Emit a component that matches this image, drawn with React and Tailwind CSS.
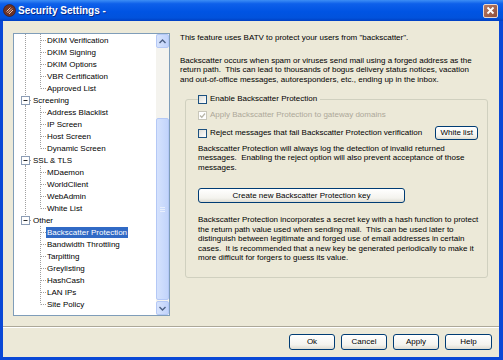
import React from "react";

const rows = [
  { t: "DKIM Verification", c: 1, root: "full" },
  { t: "DKIM Signing", c: 1, root: "full" },
  { t: "DKIM Options", c: 1, root: "full" },
  { t: "VBR Certification", c: 1, root: "full" },
  { t: "Approved List", c: 1, root: "full", last: true },
  { t: "Screening", c: 0, root: "full" },
  { t: "Address Blacklist", c: 1, root: "full" },
  { t: "IP Screen", c: 1, root: "full" },
  { t: "Host Screen", c: 1, root: "full" },
  { t: "Dynamic Screen", c: 1, root: "full", last: true },
  { t: "SSL & TLS", c: 0, root: "full" },
  { t: "MDaemon", c: 1, root: "full" },
  { t: "WorldClient", c: 1, root: "full" },
  { t: "WebAdmin", c: 1, root: "full" },
  { t: "White List", c: 1, root: "full", last: true },
  { t: "Other", c: 0, root: "top" },
  { t: "Backscatter Protection", c: 1, root: "none", sel: true },
  { t: "Bandwidth Throttling", c: 1, root: "none" },
  { t: "Tarpitting", c: 1, root: "none" },
  { t: "Greylisting", c: 1, root: "none" },
  { t: "HashCash", c: 1, root: "none" },
  { t: "LAN IPs", c: 1, root: "none" },
  { t: "Site Policy", c: 1, root: "none", last: true },
];

const dot = { stroke: "#a0a0a0", strokeWidth: 1, strokeDasharray: "1 1" };

function TreeRow({ r }) {
  if (r.c === 0) {
    return (
      <div className="flex h-[12px] items-center">
        <svg width="18" height="12" className="shrink-0">
          <line x1="11.5" y1="0" x2="11.5" y2="2" {...dot} />
          {r.root === "full" && <line x1="11.5" y1="11" x2="11.5" y2="12" {...dot} />}
          <line x1="16" y1="6.5" x2="18" y2="6.5" {...dot} />
          <rect x="7.5" y="2.5" width="8" height="8" fill="white" stroke="#8c9db5" strokeWidth="1" />
          <line x1="9.5" y1="6.5" x2="13.5" y2="6.5" stroke="#2a2a2a" strokeWidth="1" />
        </svg>
        <span className="pl-[1px] leading-[11px] text-black">{r.t}</span>
      </div>
    );
  }
  return (
    <div className="flex h-[12px] items-center">
      <svg width="32" height="12" className="shrink-0">
        {r.root === "full" && <line x1="11.5" y1="0" x2="11.5" y2="12" {...dot} />}
        <line x1="26.5" y1="0" x2="26.5" y2={r.last ? 6.5 : 12} {...dot} />
        <line x1="27" y1="6.5" x2="32" y2="6.5" {...dot} />
      </svg>
      <span
        className={
          r.sel
            ? "px-[1px] leading-[11px] bg-[#316ac5] text-white"
            : "px-[1px] leading-[11px] text-black"
        }
      >
        {r.t}
      </span>
    </div>
  );
}

function Chevron({ up }) {
  return (
    <svg width="7" height="5" viewBox="0 0 7 5">
      <path
        d={up ? "M0.5 4 L3.5 1 L6.5 4" : "M0.5 1 L3.5 4 L6.5 1"}
        fill="none"
        stroke="#4d6185"
        strokeWidth="1.4"
      />
    </svg>
  );
}

function ScrollBar() {
  return (
    <div className="flex h-full w-[13px] shrink-0 flex-col bg-[#f4f3ee]">
      <div className="flex h-[14px] items-center justify-center rounded-[2px] border border-[#b4c8f6] bg-[linear-gradient(to_right,#d7e3fc,#c1d3fb)]">
        <Chevron up />
      </div>
      <div className="h-[70px]" />
      <div className="flex h-[182px] items-center justify-center rounded-[2px] border border-[#b4c8f6] bg-[linear-gradient(to_right,#d5e2fd,#c2d4fb)]">
        <div className="flex flex-col gap-[1px]">
          <div className="h-[1px] w-[5px] bg-[#e8effd]" />
          <div className="h-[1px] w-[5px] bg-[#e8effd]" />
          <div className="h-[1px] w-[5px] bg-[#e8effd]" />
        </div>
      </div>
      <div className="h-[1px]" />
      <div className="flex h-[14px] items-center justify-center rounded-[2px] border border-[#b4c8f6] bg-[linear-gradient(to_right,#d7e3fc,#c1d3fb)]">
        <Chevron />
      </div>
    </div>
  );
}

function CheckBox({ checked, disabled }) {
  return (
    <span
      className={
        disabled
          ? "flex h-[9px] w-[9px] shrink-0 items-center justify-center border border-[#c9c7ba] bg-white"
          : "flex h-[9px] w-[9px] shrink-0 items-center justify-center border border-[#1c5180] bg-[linear-gradient(135deg,#dcdcd7,#ffffff)]"
      }
    >
      {checked && (
        <svg width="7" height="7" viewBox="0 0 7 7">
          <path d="M1 3.5 L2.8 5.3 L6 1.5" fill="none" stroke="#b8b6a8" strokeWidth="1.3" />
        </svg>
      )}
    </span>
  );
}

function Button({ children, className }) {
  return (
    <div
      className={
        "flex items-center justify-center rounded-[3px] border border-[#003c74] bg-[linear-gradient(to_bottom,#ffffff,#f4f3ee_70%,#dedcd2)] text-[8px] text-black " +
        className
      }
    >
      {children}
    </div>
  );
}

export default function App() {
  return (
    <div className="flex h-[360px] w-[503px] flex-col font-['Liberation_Sans',Arial,sans-serif]">
      {/* Title bar */}
      <div className="flex h-[21px] shrink-0 items-center bg-[linear-gradient(to_bottom,#3d8ef5_0%,#0e60ea_18%,#0054e3_55%,#0152dc_85%,#003fc2_100%)] pl-[3px] pr-[5px]">
        <svg width="13" height="13" viewBox="0 0 13 13" className="shrink-0">
          <circle cx="6.5" cy="6.5" r="6" fill="#6d3326" stroke="#3b1a12" strokeWidth="0.6" />
          <path d="M3.5 7.5 L7.5 3.5 M4.5 9 L9 4.5 M6 10 L10 6" stroke="#e9c7b5" strokeWidth="1" />
        </svg>
        <span className="ml-[2px] text-[10px] font-bold text-white [text-shadow:1px_1px_0_#0a2a8a]">
          Security Settings -
        </span>
        <div className="flex-1" />
        <div className="flex h-[14px] w-[15px] items-center justify-center rounded-[2px] border border-[#e8d8d0] bg-[linear-gradient(135deg,#b77a63,#8f4f3c)]">
          <svg width="9" height="9" viewBox="0 0 9 9">
            <path d="M1.5 1.5 L7.5 7.5 M7.5 1.5 L1.5 7.5" stroke="white" strokeWidth="1.8" />
          </svg>
        </div>
      </div>

      {/* Body */}
      <div className="flex flex-1 flex-col border-b-[3px] border-l-[3px] border-r-[4px] border-[#0a48d6] bg-[#ece9d8] text-[8px]">
        <div className="flex flex-1">
          {/* Tree */}
          <div className="ml-[10px] mt-[12px] flex h-[283px] w-[157px] border border-[#7f9db9] bg-white">
            <div className="flex-1 overflow-hidden">
              {rows.map((r) => (
                <TreeRow key={r.t} r={r} />
              ))}
            </div>
            <ScrollBar />
          </div>

          {/* Right content */}
          <div className="ml-[10px] mt-[12px] w-[312px] leading-[9.5px] text-black">
            <div className="whitespace-pre">This feature uses BATV to protect your users from "backscatter".</div>
            <div className="mt-[13px] whitespace-pre">
              <div>Backscatter occurs when spam or viruses send mail using a forged address as the</div>
              <div>return path.  This can lead to thousands of bogus delivery status notices, vacation</div>
              <div>and out-of-office messages, autoresponders, etc., ending up in the inbox.</div>
            </div>

            <fieldset className="ml-[5px] mt-[10px] w-[301px] rounded-[3px] border border-[#d0d0bf] pb-[14px] pl-[12px] pr-[9px]">
              <legend className="flex h-[10px] items-center gap-[3px] pr-[3px]">
                <CheckBox />
                <span>Enable Backscatter Protection</span>
              </legend>
              <div className="mt-[6px] flex h-[10px] items-center gap-[3px]">
                <CheckBox checked disabled />
                <span className="text-[#aca899]">Apply Backscatter Protection to gateway domains</span>
              </div>
              <div className="mt-[6px] flex h-[14px] items-center">
                <CheckBox />
                <span className="ml-[3px]">Reject messages that fail Backscatter Protection verification</span>
                <div className="flex-1" />
                <Button className="h-[14px] w-[43px]">White list</Button>
              </div>
              <div className="mt-[3.5px] whitespace-pre">
                <div>Backscatter Protection will always log the detection of invalid returned</div>
                <div>messages.  Enabling the reject option will also prevent acceptance of those</div>
                <div>messages.</div>
              </div>
              <Button className="mt-[16px] h-[15px] w-[207px]">Create new Backscatter Protection key</Button>
              <div className="mt-[12px] whitespace-pre">
                <div>Backscatter Protection incorporates a secret key with a hash function to protect</div>
                <div>the return path value used when sending mail.  This can be used later to</div>
                <div>distinguish between legitimate and forged use of email addresses in certain</div>
                <div>cases.  It is recommended that a new key be generated periodically to make it</div>
                <div>more difficult for forgers to guess its value.</div>
              </div>
            </fieldset>
          </div>
        </div>

        {/* Separator */}
        <div className="h-[2px] border-b border-t border-b-white border-t-[#aca899]" />

        {/* Buttons */}
        <div className="flex h-[29px] items-start justify-end gap-[6px] pr-[7px] pt-[6px]">
          <Button className="h-[16px] w-[46px]">Ok</Button>
          <Button className="h-[16px] w-[46px]">Cancel</Button>
          <Button className="h-[16px] w-[46px]">Apply</Button>
          <Button className="h-[16px] w-[47px]">Help</Button>
        </div>
      </div>
    </div>
  );
}
